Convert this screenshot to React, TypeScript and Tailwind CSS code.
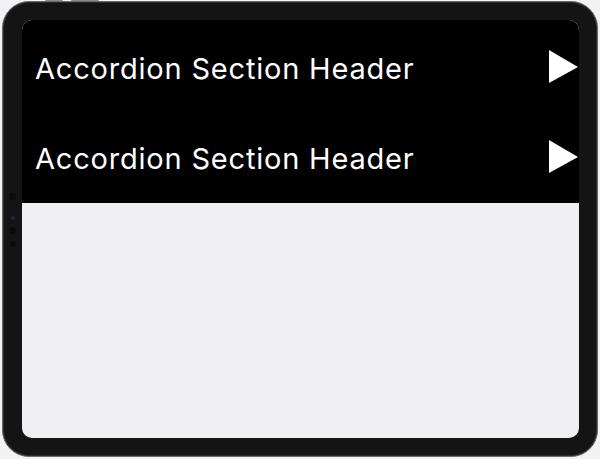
import { useState } from 'react';

const sections = ['Accordion Section Header', 'Accordion Section Header'];

export default function App() {
  const [open, setOpen] = useState<number | null>(null);

  return (
    <div className="w-[600px] h-[459px] bg-[#f2f1f3] pt-[1px] pl-[2px] relative overflow-hidden">
      {/* volume buttons on top edge */}
      <div className="absolute top-0 left-[45px] w-[18px] h-[2px] bg-[#8a8a8a] rounded-sm" />
      <div className="absolute top-0 left-[71px] w-[28px] h-[2px] bg-[#8a8a8a] rounded-sm" />

      <div className="relative w-[596px] h-[456px] rounded-[27px] bg-[#141414] border-[1.5px] border-[#6a6a6a] pl-[19px] pr-[18px] pt-[18px] pb-[18px] shadow-[inset_0_0_0_1px_#2a2a2a]">
        {/* camera dots in the left bezel */}
        <div className="absolute left-[6px] top-[191px] flex flex-col items-center gap-[7px]">
          <div className="w-[7px] h-[7px] rounded-full bg-[#0b0b0b]" />
          <div className="w-[2px] h-[2px] rounded-full bg-[#0a0a0a]" />
          <div className="w-[4px] h-[4px] rounded-full bg-[#1d2a44]" />
          <div className="w-[7px] h-[7px] rounded-full bg-[#0b0b0b]" />
          <div className="w-[6px] h-[6px] rounded-full bg-[#0b0b0b]" />
        </div>

        <div className="w-full h-full rounded-[10px] overflow-hidden bg-[#f0eff2]">
          <div className="bg-black pt-[2px] pb-[1px]">
            {sections.map((title, i) => (
              <button
                key={i}
                type="button"
                onClick={() => setOpen(open === i ? null : i)}
                className="w-full h-[90px] flex items-center justify-between pl-[13px] text-left"
              >
                <span className="text-white text-[29px] leading-none font-['Inter',sans-serif] font-normal tracking-[0.8px] mt-[2px]">
                  {title}
                </span>
                <svg width="30" height="34" viewBox="0 0 30 34" className="mb-[1px]">
                  <polygon points="0,0 29,17 0,33" fill="#fff" />
                </svg>
              </button>
            ))}
          </div>
        </div>
      </div>
    </div>
  );
}
